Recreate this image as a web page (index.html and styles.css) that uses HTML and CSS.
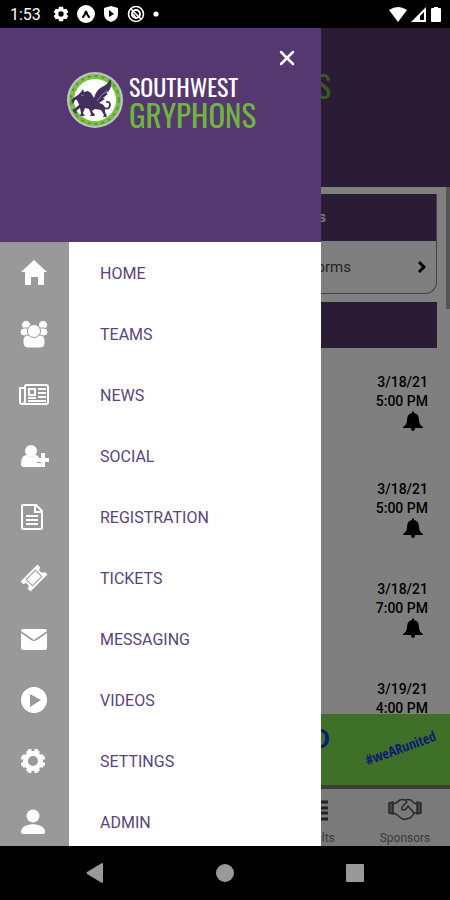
FILE: index.html
```html
<!DOCTYPE html>
<html lang="en">
<head>
	<meta charset="UTF-8">
	<meta name="viewport" content="width=device-width,initial-scale=1">
	<title>Southwest Gryphons</title>
	<link rel="stylesheet" href="styles.css">
</head>
<body>
<header class="status">
	<span class="clock">1:53</span>
	<svg width="16" height="16" viewBox="0 0 24 24"><path fill="#fff" fill-rule="evenodd" d="M9 1h6l1 4 4-1 3 5-3 3 3 3-3 5-4-1-1 4H9l-1-4-4 1-3-5 3-3-3-3 3-5 4 1zM12 8a4 4 0 1 0 0 8 4 4 0 0 0 0-8z"/></svg>
	<svg width="18" height="18" viewBox="0 0 18 18"><circle cx="9" cy="9" r="9" fill="#fff"/><path d="M6 12q2-2 3-6 1 4 3 6" fill="none" stroke="#000" stroke-width="2" stroke-linecap="round"/></svg>
	<svg width="16" height="18" viewBox="0 0 16 18"><path fill="#fff" d="M8 1l7 2v6q0 6-7 8-7-2-7-8V3z"/><path d="M6 5l5 4-5 3z"/></svg>
	<svg width="18" height="18" viewBox="0 0 18 18" fill="none" stroke="#fff"><circle cx="9" cy="9" r="7.5" stroke-width="1.6"/><circle cx="9" cy="9" r="4" stroke-width="2"/><path d="M4 4l10 10M6 9l3 4" stroke-width="1.6"/></svg>
	<svg width="6" height="6" viewBox="0 0 6 6"><circle cx="3" cy="3" r="2.6" fill="#fff"/></svg>
	<span class="signals">
		<svg width="18" height="16" viewBox="0 0 18 16"><path fill="#fff" d="M0 4q9-6 18 0L9 16z"/></svg>
		<svg width="15" height="16" viewBox="0 0 15 16"><path fill="#fff" fill-rule="evenodd" d="M15 1v15H0zM13 6l-4 4v4h4z"/></svg>
		<svg width="12" height="16" viewBox="0 0 12 16"><path fill="#fff" d="M4 1h4v1h2q1 0 1 1v12q0 1-1 1H2q-1 0-1-1V3q0-1 1-1h2z"/></svg>
	</span>
</header>

<main class="app">
	<div class="page">
		<div class="page-head"><span class="page-title">GRYPHONS</span></div>
		<div class="feed">
			<section class="card">
				<h2 class="card-title">Links</h2>
				<a class="card-link" href="#forms"><span>Forms</span>
					<svg width="9" height="14" viewBox="0 0 9 14"><path d="M2 2l5 5-5 5" fill="none" stroke="#000" stroke-width="3"/></svg>
				</a>
			</section>
			<div class="bar"></div>
			<ul class="games">
				<li class="game tall"><span>3/18/21</span><span>5:00 PM</span>
					<svg class="bell" width="20" height="20" viewBox="0 0 20 20"><path d="M10 0q1 0 1 2 5 1 5 7 0 5 4 7v1h-8q0 3-2 3t-2-3H0v-1q4-2 4-7 0-6 5-7 0-2 1-2z"/></svg></li>
				<li class="game"><span>3/18/21</span><span>5:00 PM</span>
					<svg class="bell" width="20" height="20" viewBox="0 0 20 20"><path d="M10 0q1 0 1 2 5 1 5 7 0 5 4 7v1h-8q0 3-2 3t-2-3H0v-1q4-2 4-7 0-6 5-7 0-2 1-2z"/></svg></li>
				<li class="game"><span>3/18/21</span><span>7:00 PM</span>
					<svg class="bell" width="20" height="20" viewBox="0 0 20 20"><path d="M10 0q1 0 1 2 5 1 5 7 0 5 4 7v1h-8q0 3-2 3t-2-3H0v-1q4-2 4-7 0-6 5-7 0-2 1-2z"/></svg></li>
				<li class="game"><span>3/19/21</span><span>4:00 PM</span></li>
			</ul>
			<div class="thumb"></div>
		</div>
		<div class="banner"><strong class="banner-name">UNITED</strong><span class="hashtag">#weARunited</span></div>
		<nav class="tabs">
			<a class="tab" href="#results">
				<svg width="28" height="26" viewBox="0 0 28 26"><path d="M2 5h4M9 5h18M2 11h4M9 11h18M2 16h4M9 16h18M2 22h4M9 22h18" stroke="#444" stroke-width="3"/></svg>
				Results</a>
			<a class="tab" href="#sponsors">
				<svg width="34" height="26" viewBox="0 0 34 26" fill="none" stroke="#555" stroke-width="1.6" stroke-linejoin="round" stroke-linecap="round"><path fill="#888" d="M1 6l4-1v12l-4-1zM33 6l-4-1v12l4-1z"/><path d="M5 7l3-1 4-3q2-1 5 0 3-1 6 0l3 3 3 1M5 16l3 1 5 4q2 2 5 1l4-1 3-3 1-2 3 0M19 5l-5 5q-1 3 2 3 2 0 4-4l6 7M17 3l2 2"/></svg>
				Sponsors</a>
		</nav>
	</div>
	<div class="scrim"></div>

	<aside class="drawer">
		<div class="drawer-head">
			<button class="close" aria-label="Close menu"><svg width="16" height="16" viewBox="0 0 16 16"><path d="M2 2l12 12M14 2L2 14" stroke="#fff" stroke-width="2.5" stroke-linecap="round"/></svg></button>
			<div class="brand">
				<svg width="56" height="56" viewBox="0 0 56 56">
					<circle cx="28" cy="28" r="28" fill="#c4c0c9"/>
					<circle cx="28" cy="28" r="26" fill="#7cc04a"/>
					<circle cx="28" cy="28" r="24" fill="none" stroke="#559a3c" stroke-width="2" stroke-dasharray="3 4"/>
					<circle cx="28" cy="28" r="21" fill="#fff"/>
					<path fill="#43305f" d="M8 25l3-2 3-3 2-3 1 3 4-1 3 2 3 5q2-8 8-11 6-3 9-8 1 7-2 12l-3 2 2 1-5 4 2 1-6 4q6 1 6 6v3l2 4-1 1h-3l1-2-3-5-6-1-3 2 3 4-1 1h-4l1-2-2-5-4-1-2 5 2 3h-5l1-3-1-5-4 3 1 2-2 1-2-4 6-5-1-6-3 1-2 4-2-4z"/>
					<path d="M35 35q7 4 8-2 0-4-4-3M9 25l6 10" fill="none" stroke="#43305f" stroke-width="1.8"/>
					<path d="M30 29q3-6 11-11M14 23l3 1" fill="none" stroke="#8d81a0" stroke-width="1"/>
				</svg>
				<div class="brand-text"><span class="brand-top">SOUTHWEST</span><span class="brand-bottom">GRYPHONS</span></div>
			</div>
		</div>
		<nav class="menu">
			<a class="item" href="#home"><span class="icon"><svg width="30" height="30" viewBox="0 0 30 30"><path fill="#fff" d="M15 2l13 12h-3v12q0 1-1 1h-5v-8h-7v8H7q-1 0-1-1V14H2z"/></svg></span>HOME</a>
			<a class="item" href="#teams"><span class="icon"><svg width="30" height="30" viewBox="0 0 30 30"><g fill="#fff" stroke="#999"><circle cx="7" cy="6" r="4.5"/><circle cx="24" cy="6" r="4.5"/><rect x="1" y="9" width="12" height="8" rx="4"/><rect x="17" y="9" width="12" height="8" rx="4"/><rect x="4" y="16" width="22" height="13" rx="5"/><circle cx="15" cy="12" r="6.5"/></g></svg></span>TEAMS</a>
			<a class="item" href="#news"><span class="icon"><svg width="30" height="30" viewBox="0 0 30 30"><path d="M6 5h21q2 0 2 2v15q0 2-2 2H3q-2 0-2-2V8h4M6 5v16q0 2-2 3" fill="none" stroke="#fff" stroke-width="2"/><path d="M10 9h6v6h-6zM19 9h8M19 13h8M19 17h8M9 21h18M9 18h8" fill="none" stroke="#fff" stroke-width="2"/></svg></span>NEWS</a>
			<a class="item" href="#social"><span class="icon"><svg width="30" height="30" viewBox="0 0 30 30"><g fill="#fff"><circle cx="12" cy="10" r="6"/><path d="M7 14q5 4 10 0 2 0 3 3h-2v5h4v4H5q-3 0-3-3 0-8 5-9z"/><path d="M22 12h4v5h4v4h-4v5h-4v-5h-4v-4h4z"/></g></svg></span>SOCIAL</a>
			<a class="item" href="#registration"><span class="icon"><svg width="30" height="30" viewBox="0 0 30 30"><path d="M4 3h13l6 6v17q0 1-1 1H4q-1 0-1-1V4q0-1 1-1zM16 3v7h7M7 14h12M7 18h12M7 22h12" fill="none" stroke="#fff" stroke-width="2"/></svg></span>REGISTRATION</a>
			<a class="item" href="#tickets"><span class="icon"><svg width="30" height="30" viewBox="0 0 30 30"><g transform="rotate(-45 15 15)"><path fill="#fff" fill-rule="evenodd" d="M3 8h24v4a3 3 0 0 0 0 6v4H3v-4a3 3 0 0 0 0-6zM8 10v10h14V10z"/><path fill="#fff" d="M9 11h12v8H9z"/></g></svg></span>TICKETS</a>
			<a class="item" href="#messaging"><span class="icon"><svg width="30" height="30" viewBox="0 0 30 30"><path fill="#fff" d="M4 5h22q2 0 2 2l-13 9L2 7q0-2 2-2z"/><path fill="#fff" d="M2 9l10 7q3 2 6 0l10-7v15q0 2-2 2H4q-2 0-2-2z"/></svg></span>MESSAGING</a>
			<a class="item" href="#videos"><span class="icon"><svg width="30" height="30" viewBox="0 0 30 30"><path fill="#fff" fill-rule="evenodd" d="M15 2a13 13 0 1 0 0 26 13 13 0 0 0 0-26zM11 9l11 6-11 7z"/></svg></span>VIDEOS</a>
			<a class="item" href="#settings"><span class="icon"><svg width="30" height="30" viewBox="0 0 30 30"><circle cx="14" cy="15" r="7" fill="none" stroke="#fff" stroke-width="6"/><path d="M11 3v24M17 3v24M2 12h24M2 18h24M4 9l16 16M8 5l16 16M20 5L4 21M24 9L8 25" stroke="#fff" stroke-width="3"/><circle cx="14" cy="15" r="5" fill="#999"/></svg></span>SETTINGS</a>
			<a class="item" href="#admin"><span class="icon"><svg width="30" height="30" viewBox="0 0 30 30"><circle cx="14" cy="9" r="6.5" fill="#fff"/><path fill="#fff" d="M2 25q0-7 12-8 12 1 12 8 0 2-2 2H4q-2 0-2-2z"/></svg></span>ADMIN</a>
		</nav>
	</aside>
</main>

<footer class="system">
	<button class="sys" aria-label="Back"><svg width="18" height="20" viewBox="0 0 18 20"><path fill="#999" d="M16 0q1 0 1 1v18q0 1-1 1L1 11q-1-1 0-2z"/></svg></button>
	<button class="sys" aria-label="Home"><svg width="18" height="18" viewBox="0 0 18 18"><circle cx="9" cy="9" r="9" fill="#999"/></svg></button>
	<button class="sys" aria-label="Recent apps"><svg width="18" height="18" viewBox="0 0 18 18"><rect width="18" height="18" rx="1" fill="#999"/></svg></button>
</footer>
</body>
</html>
```
FILE: styles.css
```css
* {
	box-sizing: border-box;
}
body {
	margin: 0;
	height: 100vh;
	display: flex;
	flex-direction: column;
	font-family: Roboto, "Liberation Sans", sans-serif;
	background: #000;
}
svg {
	display: block;
	flex: none;
}
a {
	color: inherit;
	text-decoration: none;
}
button {
	background: none;
	border: 0;
	padding: 0;
}

/* status bar */
.status {
	flex: none;
	height: 28px;
	padding: 0 8px 0 10px;
	display: flex;
	align-items: center;
	gap: 8px;
	color: #fff;
}
.clock {
	font-size: 16px;
	margin-right: 4px;
}
.signals {
	margin-left: auto;
	display: flex;
	gap: 4px;
}

.app {
	flex: 1;
	min-height: 0;
	position: relative;
	overflow: hidden;
}

/* page under the drawer */
.page {
	height: 100%;
	display: flex;
	flex-direction: column;
	background: #fff;
}
.page-head {
	flex: none;
	height: 159px;
	background: #57386d;
	padding: 37px 119px 0 0;
	text-align: right;
}
.page-title {
	font-family: "Oswald", "Open Sans Condensed", "Liberation Sans Narrow", sans-serif;
	font-size: 31px;
	line-height: 40px;
	color: #6fb43f;
}
.feed {
	flex: 1;
	min-height: 0;
	position: relative;
	overflow: hidden;
	padding: 7px 13px 0;
}
.card {
	border: 1px solid #888;
	border-top: 0;
	border-radius: 0 0 12px 12px;
}
.card-title {
	margin: 0;
	height: 47px;
	padding-right: 110px;
	background: #57386d;
	color: #fff;
	font-size: 15px;
	font-weight: 500;
	line-height: 47px;
	text-align: right;
}
.card-link {
	height: 52px;
	padding: 0 10px 0 0;
	display: flex;
	align-items: center;
	justify-content: flex-end;
	gap: 66px;
	font-size: 15px;
	color: #444;
}
.bar {
	height: 46px;
	margin-top: 8px;
	background: #57386d;
}
.games {
	margin: 0;
	padding: 0;
	list-style: none;
}
.game {
	height: 100px;
	padding: 25px 9px 0 0;
	display: flex;
	flex-direction: column;
	align-items: flex-end;
	font-size: 14px;
	font-weight: 500;
	line-height: 19px;
}
.tall {
	height: 107px;
}
.bell {
	margin-right: 5px;
}
.thumb {
	position: absolute;
	top: 0;
	right: 0;
	width: 4px;
	height: 122px;
	background: #aaa;
}
.banner {
	flex: none;
	height: 71px;
	padding-right: 12px;
	display: flex;
	align-items: center;
	justify-content: flex-end;
	gap: 34px;
	background: #7de050;
	color: #1e36e0;
}
.banner-name {
	font-size: 26px;
	line-height: 26px;
	padding-bottom: 22px;
}
.hashtag {
	padding-bottom: 4px;
	font-family: "Open Sans Condensed", "Liberation Sans Narrow", sans-serif;
	font-size: 14px;
	font-weight: bold;
	transform: rotate(-20deg);
}
.tabs {
	flex: none;
	height: 61px;
	border-top: 4px solid #777;
	background: #f4f4f4;
	display: flex;
	justify-content: flex-end;
}
.tab {
	width: 20%;
	padding-top: 8px;
	display: flex;
	flex-direction: column;
	align-items: center;
	gap: 8px;
	font-size: 12px;
	line-height: 14px;
	color: #777;
}
.scrim {
	position: absolute;
	inset: 0;
	background: rgba(0,0,0,.5);
}

/* drawer */
.drawer {
	position: absolute;
	top: 0;
	bottom: 0;
	left: 0;
	width: calc(100% - 129px);
	overflow: hidden;
	background: #fff;
}
.drawer-head {
	height: 214px;
	padding: 22px 26px 0 67px;
	display: flex;
	flex-direction: column;
	background: #54386f;
}
.close {
	align-self: flex-end;
}
.brand {
	margin-top: 6px;
	display: flex;
	align-items: center;
	gap: 6px;
}
.brand-text {
	display: flex;
	flex-direction: column;
	font-family: "Oswald", "Open Sans Condensed", "Liberation Sans Narrow", sans-serif;
}
.brand-top {
	font-size: 24px;
	line-height: 28px;
	color: #fff;
}
.brand-bottom {
	font-size: 31px;
	line-height: 28px;
	color: #6fb43f;
}
.item {
	height: 61px;
	display: flex;
	gap: 31px;
	font-size: 16px;
	line-height: 63px;
	color: #5a4479;
}
.icon {
	width: 69px;
	height: 61px;
	flex: none;
	padding-right: 2px;
	display: grid;
	place-items: center;
	background: #999;
}

/* android buttons */
.system {
	flex: none;
	height: 54px;
	padding: 0 30px;
	display: flex;
}
.sys {
	flex: 1;
	display: grid;
	place-items: center;
}
```
